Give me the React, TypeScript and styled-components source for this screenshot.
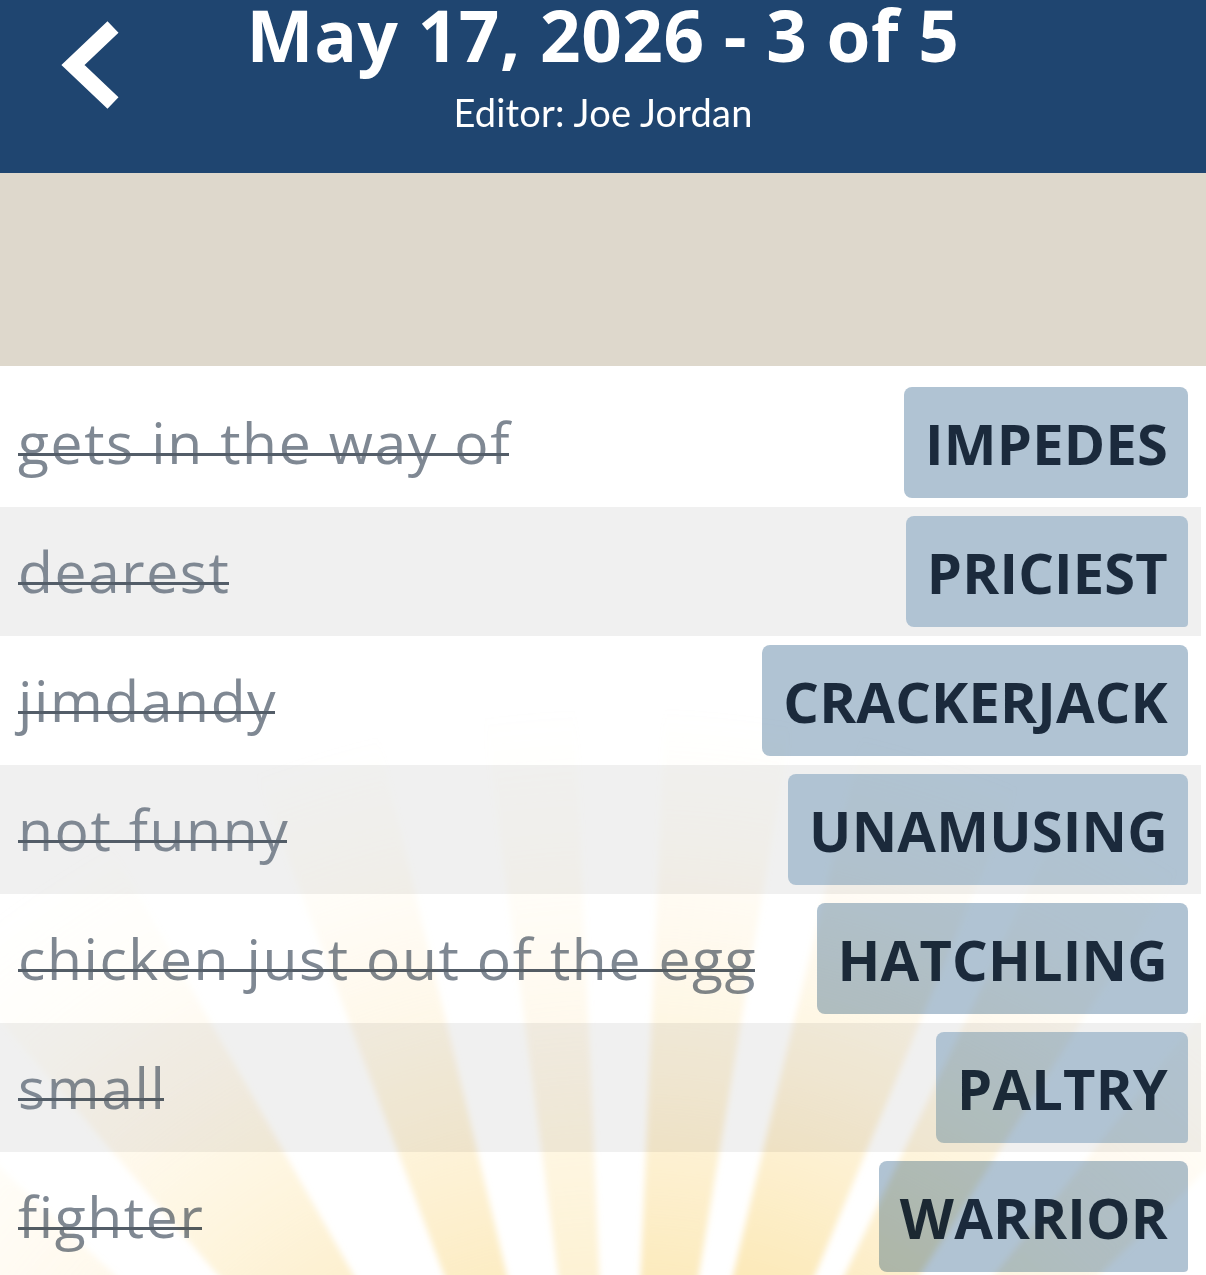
import React from "react";
import styled, { createGlobalStyle } from "styled-components";

const GlobalStyle = createGlobalStyle`
  html, body {
    margin: 0;
    padding: 0;
    background: #ffffff;
    overflow: hidden;
  }
  * {
    box-sizing: border-box;
  }
`;

interface IClue {
  clue: string;
  answer: string;
}

const clues: IClue[] = [
  { clue: "gets in the way of", answer: "IMPEDES" },
  { clue: "dearest", answer: "PRICIEST" },
  { clue: "jimdandy", answer: "CRACKERJACK" },
  { clue: "not funny", answer: "UNAMUSING" },
  { clue: "chicken just out of the egg", answer: "HATCHLING" },
  { clue: "small", answer: "PALTRY" },
  { clue: "fighter", answer: "WARRIOR" },
];

// sun rays behind the bottom of the list: [angle from vertical, half width, strength]
const rays: [number, number, number][] = [
  [-51, 4, 0.55],
  [-35, 5.5, 0.8],
  [-17, 3.5, 0.85],
  [-5, 2.5, 0.6],
  [6, 3.5, 0.9],
  [18, 4.5, 1],
  [29, 3.5, 0.9],
  [42, 3.5, 0.6],
];

const Page = styled.div`
  width: 100%;
  height: 100vh;
  overflow: hidden;
  display: flex;
  flex-direction: column;
  font-family: "Open Sans", "Liberation Sans", sans-serif;
`;

const Header = styled.header`
  height: 173px;
  flex-shrink: 0;
  background: #1f4570;
  display: grid;
  grid-template-columns: 1fr auto 1fr;
  align-items: start;
`;

const BackButton = styled.button`
  justify-self: start;
  margin: 15px 0 0 55px;
  padding: 0;
  border: none;
  background: none;
  display: flex;
`;

const TitleBlock = styled.div`
  display: flex;
  flex-direction: column;
  align-items: center;
  color: #ffffff;
`;

const Title = styled.h1`
  margin: 0;
  font-family: "Open Sans", "Liberation Sans", sans-serif;
  font-weight: 700;
  font-size: 71px;
  line-height: 70px;
  letter-spacing: 0.6px;
  white-space: nowrap;
`;

const Subtitle = styled.div`
  margin-top: 23px;
  font-family: Lato, "Open Sans", sans-serif;
  font-weight: 400;
  font-size: 38px;
  line-height: 38px;
  letter-spacing: 0.2px;
`;

const Banner = styled.div`
  height: 193px;
  flex-shrink: 0;
  background: #ded8cc;
`;

const List = styled.div`
  position: relative;
  padding-top: 12px;
  background: #ffffff;
`;

const Row = styled.div<{ $shaded: boolean }>`
  width: 1201px;
  height: 129px;
  display: flex;
  align-items: center;
  justify-content: space-between;
  padding: 0 13px 0 18px;
  background: ${(p) => (p.$shaded ? "#f0f0f0" : "#ffffff")};
`;

const Clue = styled.span`
  position: relative;
  font-size: 57px;
  line-height: 1;
  font-weight: 400;
  letter-spacing: 1.6px;
  color: #7f8893;
  white-space: nowrap;

  &::after {
    content: "";
    position: absolute;
    left: 0;
    right: 2px;
    top: 0.69em;
    height: 3px;
    background: #535d68;
  }
`;

const Answer = styled.span`
  height: 111px;
  padding: 0 20px 0 21px;
  display: flex;
  align-items: center;
  border-radius: 8px 8px 4px 8px;
  background: #b0c3d3;
  color: #1b2a3c;
  font-size: 56px;
  font-weight: 700;
  letter-spacing: 0.2px;
  white-space: nowrap;
`;

const RayLayer = styled.svg`
  position: absolute;
  inset: 0;
  width: 100%;
  height: 100%;
  pointer-events: none;
  mix-blend-mode: multiply;
`;

// sun centre sits well below the visible list
const SUN_X = 620;
const SUN_Y = 1380;
const RAY_LEN = 1500;

function rayPoints(angle: number, half: number) {
  const rad = (d: number) => (d * Math.PI) / 180;
  const a = rad(angle - half);
  const b = rad(angle + half);
  return [
    `${SUN_X},${SUN_Y}`,
    `${SUN_X + RAY_LEN * Math.sin(a)},${SUN_Y - RAY_LEN * Math.cos(a)}`,
    `${SUN_X + RAY_LEN * Math.sin(b)},${SUN_Y - RAY_LEN * Math.cos(b)}`,
  ].join(" ");
}

function SunRays() {
  return (
    <RayLayer viewBox="0 0 1206 915" preserveAspectRatio="xMinYMin slice">
      <defs>
        <radialGradient id="rayGlow" gradientUnits="userSpaceOnUse" cx={SUN_X} cy={SUN_Y} r={1040}>
          <stop offset="0.42" stopColor="#fbe2a2" stopOpacity={0.85} />
          <stop offset="0.66" stopColor="#fce6b0" stopOpacity={0.45} />
          <stop offset="0.88" stopColor="#fdecc4" stopOpacity={0.12} />
          <stop offset="1" stopColor="#fdecc4" stopOpacity={0} />
        </radialGradient>
        <filter id="raySoften" x="-10%" y="-10%" width="120%" height="120%">
          <feGaussianBlur stdDeviation="3" />
        </filter>
      </defs>
      <g filter="url(#raySoften)">
        {rays.map(([angle, half, strength], i) => (
          <polygon key={i} points={rayPoints(angle, half)} fill="url(#rayGlow)" opacity={strength} />
        ))}
      </g>
    </RayLayer>
  );
}

function BackChevron() {
  return (
    <svg width="70" height="100" viewBox="0 0 70 100">
      <polyline
        points="58,12 18,50 58,88"
        fill="none"
        stroke="#ffffff"
        strokeWidth="16"
        strokeLinejoin="miter"
        strokeLinecap="butt"
      />
    </svg>
  );
}

export default function App() {
  return (
    <Page>
      <GlobalStyle />
      <Header>
        <BackButton aria-label="Back">
          <BackChevron />
        </BackButton>
        <TitleBlock>
          <Title>May 17, 2026 - 3 of 5</Title>
          <Subtitle>Editor: Joe Jordan</Subtitle>
        </TitleBlock>
        <div />
      </Header>
      <Banner />
      <List>
        {clues.map((c, i) => (
          <Row key={c.answer} $shaded={i % 2 === 1}>
            <Clue>{c.clue}</Clue>
            <Answer>{c.answer}</Answer>
          </Row>
        ))}
        <SunRays />
      </List>
    </Page>
  );
}
